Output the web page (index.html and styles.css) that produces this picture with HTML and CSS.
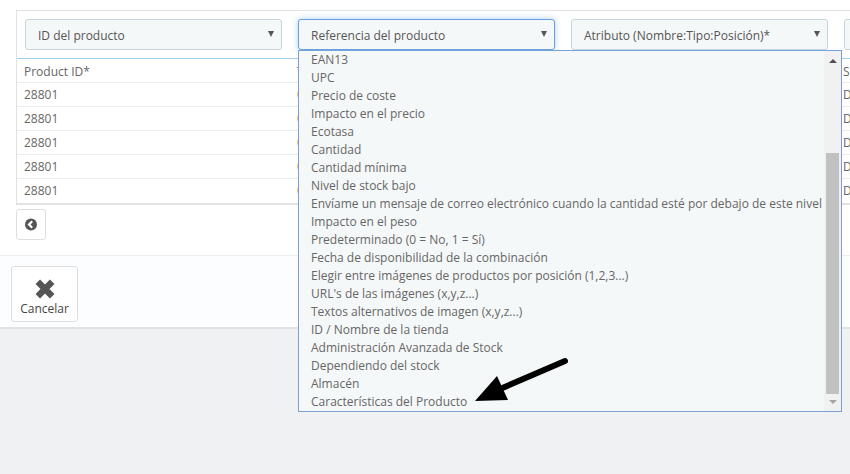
FILE: index.html
```html
<!DOCTYPE html>
<html lang="es">
<head>
<meta charset="utf-8">
<title>Importar</title>
<link rel="stylesheet" href="styles.css">
</head>
<body>
<main class="panel">
  <section class="box">
    <div class="selects">
      <div class="select">ID del producto</div>
      <div class="select focus">Referencia del producto</div>
      <div class="select">Atributo (Nombre:Tipo:Posición)*</div>
      <div class="select"></div>
    </div>
    <div class="table">
      <div class="row head"><span>Product ID*</span><span>T</span><span></span><span>S</span></div>
      <div class="row"><span>28801</span><span>0</span><span></span><span>D</span></div>
      <div class="row"><span>28801</span><span>0</span><span></span><span>D</span></div>
      <div class="row"><span>28801</span><span>0</span><span></span><span>D</span></div>
      <div class="row"><span>28801</span><span>0</span><span></span><span>D</span></div>
      <div class="row"><span>28801</span><span>0</span><span></span><span>D</span></div>
    </div>
  </section>
  <button class="pager" type="button" aria-label="Anterior">
    <svg width="14" height="14" viewBox="0 0 14 14"><circle cx="7" cy="6.5" r="6" fill="#555"/><path d="M8.2 3.3 5 6.5l3.2 3.2" fill="none" stroke="#fff" stroke-width="2.2"/></svg>
  </button>
</main>
<footer class="footer">
  <button class="cancel" type="button">
    <svg width="20" height="20" viewBox="0 0 20 20"><path d="M2.8 2.8 17.2 17.2M17.2 2.8 2.8 17.2" stroke="#555" stroke-width="6.4" stroke-linecap="butt"/></svg>
    <span>Cancelar</span>
  </button>
</footer>
<div class="dropdown">
  <ul class="options">
    <li>EAN13</li>
    <li>UPC</li>
    <li>Precio de coste</li>
    <li>Impacto en el precio</li>
    <li>Ecotasa</li>
    <li>Cantidad</li>
    <li>Cantidad mínima</li>
    <li>Nivel de stock bajo</li>
    <li>Envíame un mensaje de correo electrónico cuando la cantidad esté por debajo de este nivel</li>
    <li>Impacto en el peso</li>
    <li>Predeterminado (0 = No, 1 = Sí)</li>
    <li>Fecha de disponibilidad de la combinación</li>
    <li>Elegir entre imágenes de productos por posición (1,2,3...)</li>
    <li>URL's de las imágenes (x,y,z...)</li>
    <li>Textos alternativos de imagen (x,y,z...)</li>
    <li>ID / Nombre de la tienda</li>
    <li>Administración Avanzada de Stock</li>
    <li>Dependiendo del stock</li>
    <li>Almacén</li>
    <li>Características del Producto</li>
  </ul>
  <div class="scrollbar">
    <i class="up"></i>
    <div class="thumb"></div>
    <i class="down"></i>
  </div>
</div>
<svg class="arrow" width="100" height="52" viewBox="0 0 100 52"><path d="M95 6 30 34" stroke="#000" stroke-width="6" stroke-linecap="round"/><path d="M5 46 27 21 38 45Z" fill="#000"/></svg>
</body>
</html>
```
FILE: styles.css
```css
* { box-sizing: border-box; }
html, body { margin: 0; height: 100%; }
body {
  position: relative;
  overflow: hidden;
  background: #eff1f3;
  font-family: "Open Sans", "Liberation Sans", sans-serif;
  font-size: 12px;
  line-height: 18px;
  color: #666;
}
.panel {
  height: 256px;
  padding: 10px 0 0 16px;
  background: #fff;
  border-bottom: 1px solid #e9eef2;
}
.box {
  overflow: hidden;
  border: 1px solid #e2e2e2;
  border-right: 0;
  border-bottom: 2px solid #e2e2e2;
}
.selects {
  display: flex;
  gap: 16px;
  padding: 8px 0 8px 8px;
}
.select {
  position: relative;
  flex: 0 0 257px;
  height: 31px;
  padding: 7px 12px 5px;
  background: #f5f8f9;
  border: 1px solid #c7d6db;
  border-radius: 3px;
  color: #555;
  line-height: 18px;
}
.select::after {
  content: "";
  position: absolute;
  right: 7px;
  top: 11px;
  border: 3px solid transparent;
  border-top: 6px solid #555;
  border-bottom: 0;
}
.focus {
  border-color: #66a0e0;
  box-shadow: 0 0 6px rgba(102, 175, 233, .55);
}
.table { border-top: 1px solid #a0d0eb; }
.row {
  display: grid;
  grid-template-columns: 273px 273px 273px 1fr;
  height: 24px;
  padding-left: 7px;
  border-bottom: 1px solid #eaedef;
  line-height: 24px;
}
.row:last-child { border-bottom: 0; }
.row.head { line-height: 26px; }
.pager {
  display: flex;
  align-items: center;
  justify-content: center;
  width: 30px;
  height: 31px;
  margin-top: 4px;
  padding: 0;
  background: #fff;
  border: 1px solid #dcdfe1;
  border-radius: 3px;
}
.footer {
  height: 73px;
  padding: 10px 0 0 11px;
  background: #fcfdfe;
  border-bottom: 2px solid #dfe2e4;
}
.cancel {
  display: flex;
  flex-direction: column;
  align-items: center;
  width: 67px;
  height: 56px;
  padding: 12px 0 0;
  background: #fff;
  border: 1px solid #dcdfe1;
  border-radius: 3px;
  font: inherit;
  color: #444;
  line-height: 18px;
}
.cancel span { margin-top: 1px; }
.dropdown {
  position: absolute;
  left: 298px;
  top: 50px;
  width: 544px;
  height: 362px;
  display: flex;
  background: #f5f8f9;
  border: 1px solid #7d9fd6;
  border-top-color: #76a3dc;
  overflow: hidden;
}
.options {
  flex: 1;
  margin: 0;
  padding: 0 0 0 12px;
  list-style: none;
  color: #666;
}
.options li { height: 18px; white-space: nowrap; }
.scrollbar {
  position: relative;
  flex: 0 0 17px;
  background: #f1f1f1;
}
.thumb {
  position: absolute;
  left: 2px;
  right: 2px;
  top: 102px;
  height: 241px;
  background: #c1c1c1;
}
.up, .down {
  position: absolute;
  left: 5px;
  border: 4px solid transparent;
}
.up { top: 8px; border-top: 0; border-bottom: 4px solid #505050; }
.down { bottom: 7px; border-bottom: 0; border-top: 4px solid #a3a3a3; }
.arrow {
  position: absolute;
  left: 470px;
  top: 355px;
}
```
